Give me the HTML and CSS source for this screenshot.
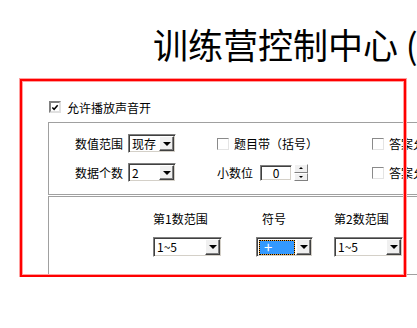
FILE: index.html
```html
<!DOCTYPE html>
<html lang="zh-CN">
<head>
    <meta charset="UTF-8">
    <title>训练营控制中心</title>
    <link rel="stylesheet" href="styles.css">
</head>
<body>

    <h1 class="title">训练营控制中心 (加减法)</h1>

    <div class="panel">
        <div class="check-row">
            <span class="box checked">
                <svg width="9" height="9" viewBox="0 0 9 9"><path d="M1.5 4.5 L3.5 6.5 L7.5 2" fill="none" stroke="#000" stroke-width="1.7"/></svg>
            </span>
            允许播放声音开
        </div>

        <div class="group group-top">
            <div class="row">
                <span class="label">数值范围</span>
                <div class="combo combo-small"><span class="value">现存</span><span class="drop"><i></i></span></div>
                <div class="opt"><span class="box"></span>题目带（括号）</div>
                <div class="opt"><span class="box"></span>答案允许负数</div>
            </div>
            <div class="row">
                <span class="label">数据个数</span>
                <div class="combo combo-small"><span class="value">2</span><span class="drop"><i></i></span></div>
                <div class="opt">
                    <span class="spin-label">小数位</span>
                    <span class="spin-field">0</span>
                    <span class="spin-btns">
                        <span class="spin-up"><i></i></span>
                        <span class="spin-down"><i></i></span>
                    </span>
                </div>
                <div class="opt"><span class="box"></span>答案允许余数</div>
            </div>
        </div>

        <div class="group group-bottom">
            <div class="cols">
                <span class="col-label">第1数范围</span>
                <span class="col-label sign-label">符号</span>
                <span class="col-label">第2数范围</span>

                <div class="combo combo-wide"><span class="value">1~5</span><span class="drop"><i></i></span></div>
                <div class="combo combo-sign"><span class="value selected">+</span><span class="drop"><i></i></span></div>
                <div class="combo combo-wide"><span class="value">1~5</span><span class="drop"><i></i></span></div>
            </div>
        </div>
    </div>

</body>
</html>
```

FILE: styles.css
```css
html, body {
    overflow: hidden;
}
body {
    margin: 0;
    font-family: "Noto Sans CJK SC", sans-serif;
    font-size: 12px;
    color: #000;
    background: #fff;
}
.title {
    margin: 0;
    padding: 19px 0 0 153px;
    font-size: 35px;
    font-weight: normal;
    line-height: 50px;
    white-space: nowrap;
}
.panel {
    position: relative;
    margin: 10px 0 0 20px;
    width: 386px;
    height: 198px;
    padding: 20px 0 0 28px;
    box-sizing: border-box;
}
/* red highlight frame drawn over the form */
.panel::after {
    content: '';
    position: absolute;
    top: 0;
    left: 0;
    right: 0;
    bottom: 0;
    border: 2px solid #ff0000;
    box-shadow: 0 0 0 1px #ffa0a0, inset 0 0 0 1px #ffa0a0;
    pointer-events: none;
}
.check-row {
    display: flex;
    align-items: center;
    gap: 6px;
    height: 16px;
    margin-left: 1px;
    white-space: nowrap;
}
.box {
    display: inline-flex;
    align-items: center;
    justify-content: center;
    width: 12px;
    height: 12px;
    box-sizing: border-box;
    border: 1px solid;
    border-color: #8a8a8a #e4e4e4 #e4e4e4 #8a8a8a;
    background: #fff;
    flex: none;
}
.box.checked {
    border-width: 2px;
    border-color: #808080 #e0e0e0 #e0e0e0 #808080;
}
.group {
    width: 400px;
    border: 1px solid #a0a0a0;
    box-sizing: border-box;
}
.group-top {
    margin-top: 7px;
    height: 73px;
    padding-top: 11px;
}
.group-bottom {
    margin-top: 1px;
    height: 79px;
    padding-top: 14px;
}
.row {
    display: flex;
    align-items: center;
    height: 19px;
    white-space: nowrap;
}
.row + .row {
    margin-top: 10px;
}
.label {
    flex: none;
    width: 76px;
    padding-right: 2px;
    box-sizing: border-box;
    text-align: right;
}
.combo {
    display: flex;
    align-items: stretch;
    box-sizing: border-box;
    border: 1px solid;
    border-color: #808080 #fff #fff #808080;
    box-shadow: inset 1px 1px 0 #404040, inset -1px -1px 0 #d4d0c8;
    background: #fff;
    flex: none;
}
.combo-small {
    margin-left: 3px;
    width: 48px;
    height: 19px;
}
.combo-wide {
    width: 69px;
    height: 20px;
}
.combo-sign {
    width: 57px;
    height: 20px;
}
.value {
    flex: 1;
    padding-left: 3px;
    line-height: 15px;
    margin-top: 1px;
    white-space: nowrap;
}
.value.selected {
    margin: 2px 1px 1px 2px;
    padding-left: 4px;
    border: 1px dotted #000;
    background: linear-gradient(#3399ff, #3399ff) padding-box, #f0a030;
    color: #fff;
    font-size: 15px;
    line-height: 12px;
}
.drop {
    display: flex;
    align-items: center;
    justify-content: center;
    flex: none;
    width: 15px;
    margin: 1px 1px 1px 0;
    box-sizing: border-box;
    border: 1px solid;
    border-color: #fff #404040 #404040 #fff;
    box-shadow: inset -1px -1px 0 #808080;
    background: #f0f0f0;
}
.drop i {
    width: 0;
    height: 0;
    border-left: 4px solid transparent;
    border-right: 4px solid transparent;
    border-top: 4px solid #000;
}
.opt {
    display: flex;
    align-items: center;
    gap: 5px;
    width: 155px;
    flex: none;
    white-space: nowrap;
}
.row .combo + .opt {
    margin-left: 41px;
}
.spin-label {
    margin-right: 2px;
}
.spin-field {
    flex: none;
    width: 32px;
    height: 16px;
    box-sizing: border-box;
    border: 1px solid;
    border-color: #808080 #fff #fff #808080;
    box-shadow: inset 1px 1px 0 #404040, inset -1px -1px 0 #d4d0c8;
    text-align: center;
    line-height: 14px;
}
.spin-btns {
    display: flex;
    flex-direction: column;
    flex: none;
    width: 14px;
    height: 17px;
    margin-left: -3px;
}
.spin-up, .spin-down {
    display: flex;
    align-items: center;
    justify-content: center;
    flex: 1;
    box-sizing: border-box;
    border: 1px solid;
    border-color: #fff #808080 #808080 #fff;
    background: #f0f0f0;
}
.spin-up i, .spin-down i {
    width: 0;
    height: 0;
    border-left: 2px solid transparent;
    border-right: 2px solid transparent;
}
.spin-up i {
    border-bottom: 2px solid #000;
}
.spin-down i {
    border-top: 2px solid #000;
}
.cols {
    display: grid;
    grid-template-columns: 103px 78px 80px;
    row-gap: 10px;
    margin-left: 104px;
    white-space: nowrap;
}
.col-label {
    line-height: 16px;
}
.sign-label {
    padding-left: 6px;
}
```
